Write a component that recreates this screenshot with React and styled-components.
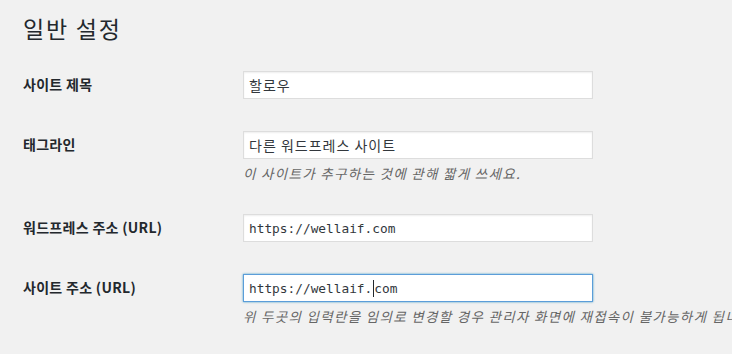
import React from "react";
import styled, { createGlobalStyle } from "styled-components";

const Global = createGlobalStyle`
  html, body {
    margin: 0;
    background: #f1f1f1;
    overflow: hidden;
  }
  body {
    font-family: "Noto Sans CJK KR", "Noto Sans", sans-serif;
    color: #23282d;
  }
`;

const Wrap = styled.div`
  padding: 0 0 0 23px;
`;

const Title = styled.h1`
  margin: 0 0 12px;
  padding-top: 13px;
  font-size: 23px;
  font-weight: 400;
  line-height: 30px;
  letter-spacing: 1.8px;
  color: #23282d;
`;

const Table = styled.div`
  display: grid;
  grid-template-columns: 210px 1fr;
`;

const Label = styled.div`
  padding: 20px 10px 20px 0;
  font-size: 14px;
  font-weight: 700;
  line-height: 18px;
  letter-spacing: 0.3px;
  white-space: nowrap;
`;

const Cell = styled.div`
  padding: 15px 10px;
  min-width: 0;
`;

const Field = styled.div`
  box-sizing: border-box;
  width: 350px;
  height: 28px;
  margin: 1px 0;
  padding: 0 5px;
  display: flex;
  align-items: center;
  background: #fff;
  color: #32373c;
  border: 1px solid ${(p) => (p.$focused ? "#5b9dd9" : "#ddd")};
  box-shadow: ${(p) =>
    p.$focused
      ? "0 0 2px rgba(30, 140, 190, 0.8)"
      : "inset 0 1px 2px rgba(0, 0, 0, 0.07)"};
  font-family: ${(p) =>
    p.$mono
      ? '"DejaVu Sans Mono", "Liberation Mono", monospace'
      : '"Noto Sans CJK KR", sans-serif'};
  font-size: ${(p) => (p.$mono ? "12.8px" : "14px")};
  letter-spacing: ${(p) => (p.$mono ? "0" : "1px")};
  white-space: nowrap;
`;

const Caret = styled.span`
  display: inline-block;
  width: 1px;
  height: 17px;
  background: #23282d;
  vertical-align: middle;
  margin-left: 1px;
`;

const Desc = styled.p`
  margin: 4px 0 0;
  font-size: 13.5px;
  line-height: 20px;
  letter-spacing: 1.3px;
  font-style: italic;
  color: #666;
  white-space: nowrap;
`;

const rows = [
  { label: "사이트 제목", value: "할로우" },
  {
    label: "태그라인",
    value: "다른 워드프레스 사이트",
    desc: "이 사이트가 추구하는 것에 관해 짧게 쓰세요.",
  },
  { label: "워드프레스 주소 (URL)", value: "https://wellaif.com", mono: true },
  {
    label: "사이트 주소 (URL)",
    value: "https://wellaif.com",
    mono: true,
    caretAt: 16,
    desc: "위 두곳의 입력란을 임의로 변경할 경우 관리자 화면에 재접속이 불가능하게 됩니다.",
  },
];

export default function App() {
  return (
    <Wrap>
      <Global />
      <Title>일반 설정</Title>
      <Table>
        {rows.map((r) => (
          <React.Fragment key={r.label}>
            <Label>{r.label}</Label>
            <Cell>
              <Field $mono={r.mono} $focused={r.caretAt != null}>
                {r.caretAt != null ? (
                  <>
                    {r.value.slice(0, r.caretAt)}
                    <Caret />
                    {r.value.slice(r.caretAt)}
                  </>
                ) : (
                  r.value
                )}
              </Field>
              {r.desc && <Desc>{r.desc}</Desc>}
            </Cell>
          </React.Fragment>
        ))}
      </Table>
    </Wrap>
  );
}
